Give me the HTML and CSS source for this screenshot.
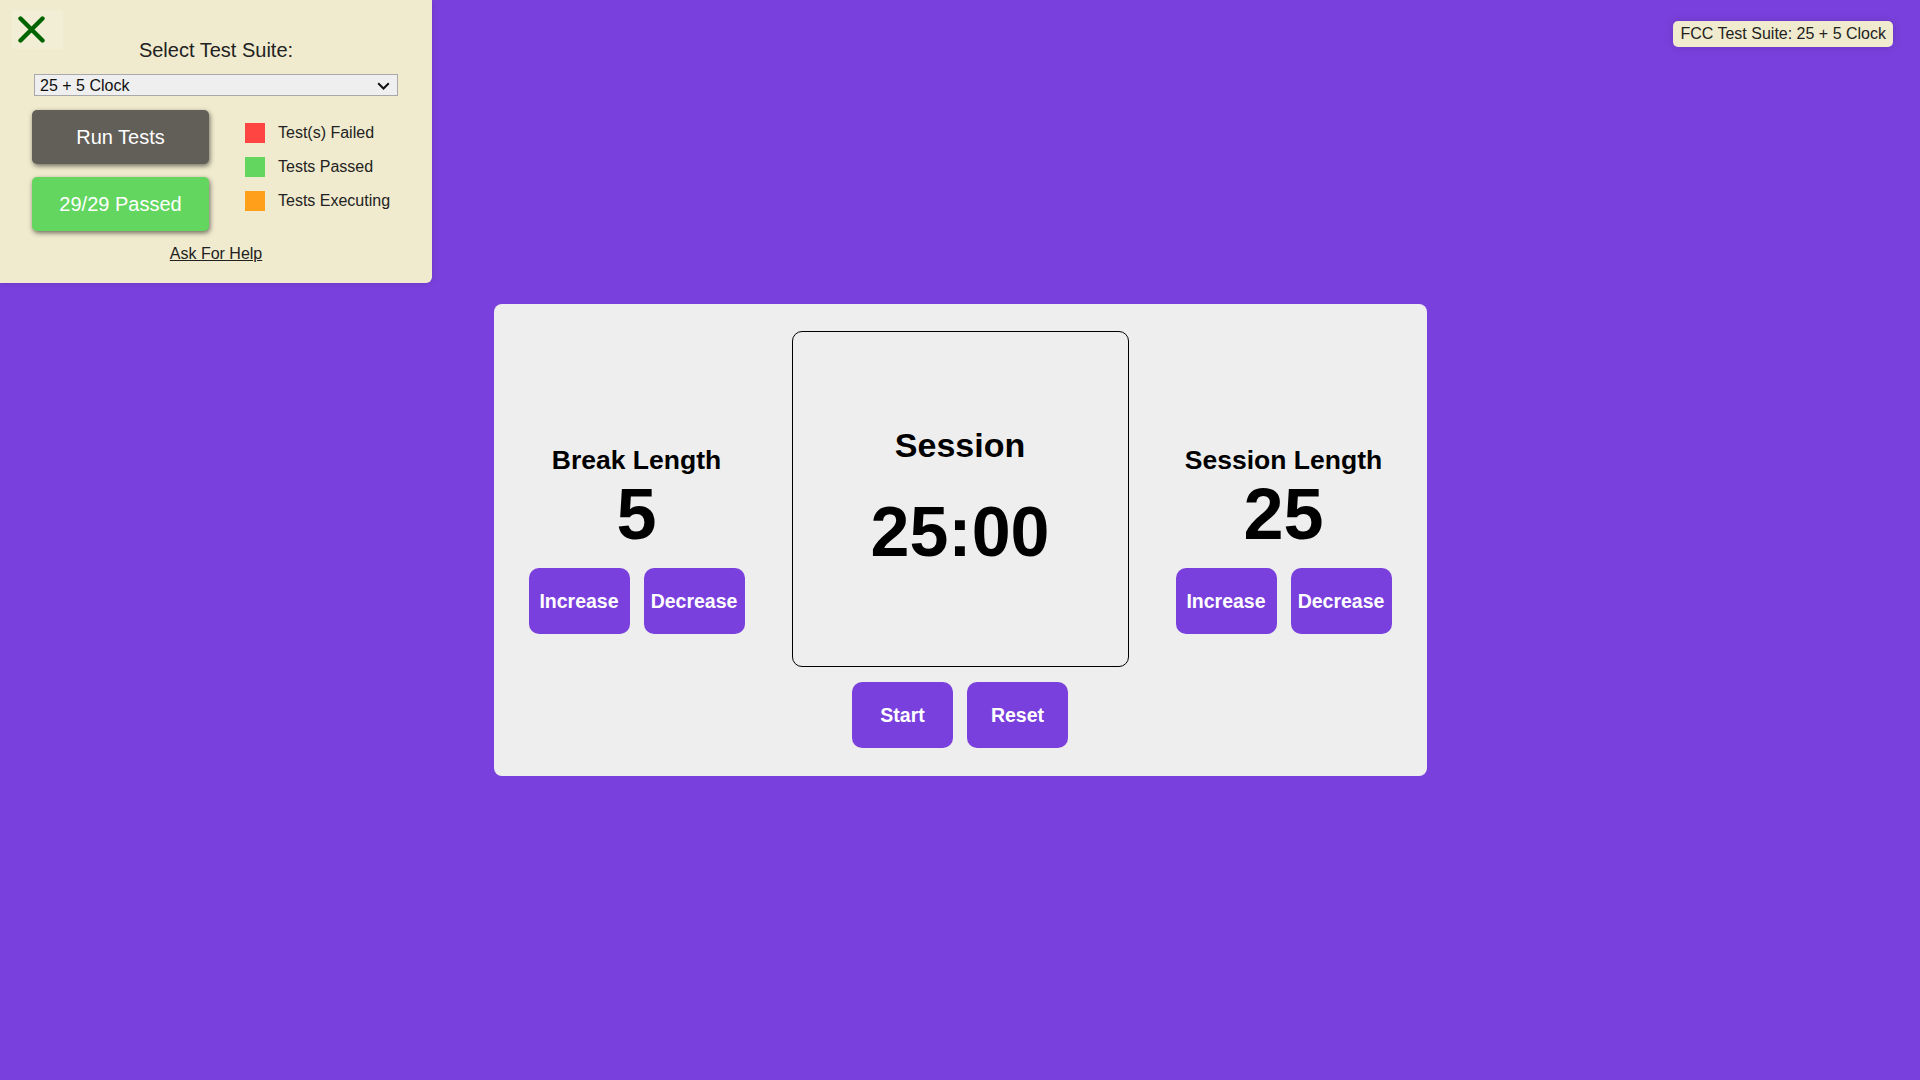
FILE: index.html
```html
<!DOCTYPE html>
<html lang="en">
<head>
<meta charset="utf-8">
<title>25 + 5 Clock</title>
<link rel="stylesheet" href="styles.css">
</head>
<body>
  <main class="stage">
    <section class="clock-card">
      <div class="clock-row">
        <div class="length-col">
          <h2 class="length-label" id="break-label">Break Length</h2>
          <div class="length-value" id="break-length">5</div>
          <div class="btn-pair">
            <button class="clock-btn" id="break-increment">Increase</button>
            <button class="clock-btn" id="break-decrement">Decrease</button>
          </div>
        </div>
        <div class="timer-box">
          <h2 class="timer-label" id="timer-label">Session</h2>
          <div class="timer-value" id="time-left">25:00</div>
        </div>
        <div class="length-col">
          <h2 class="length-label" id="session-label">Session Length</h2>
          <div class="length-value" id="session-length">25</div>
          <div class="btn-pair">
            <button class="clock-btn" id="session-increment">Increase</button>
            <button class="clock-btn" id="session-decrement">Decrease</button>
          </div>
        </div>
      </div>
      <div class="control-row">
        <button class="clock-btn" id="start_stop">Start</button>
        <button class="clock-btn" id="reset">Reset</button>
      </div>
    </section>
  </main>

  <aside class="test-panel">
    <button class="close-btn" aria-label="Close">
      <svg width="27" height="27" viewBox="0 0 27 27"><path d="M2.5 2.5 L24.5 24.5 M24.5 2.5 L2.5 24.5" stroke="#006400" stroke-width="4.4" stroke-linecap="round" fill="none"/></svg>
    </button>
    <div class="panel-title">Select Test Suite:</div>
    <div class="select-wrap">
      <select class="suite-select">
        <option>25 + 5 Clock</option>
      </select>
      <svg class="select-chevron" width="13" height="8" viewBox="0 0 13 8"><path d="M1.2 1.3 L6.5 6.5 L11.8 1.3" stroke="#111" stroke-width="2" fill="none"/></svg>
    </div>
    <div class="panel-row">
      <div class="panel-buttons">
        <button class="panel-btn run-btn">Run Tests</button>
        <button class="panel-btn pass-btn">29/29 Passed</button>
      </div>
      <ul class="legend">
        <li class="legend-item"><span class="swatch swatch-fail"></span>Test(s) Failed</li>
        <li class="legend-item"><span class="swatch swatch-pass"></span>Tests Passed</li>
        <li class="legend-item"><span class="swatch swatch-exec"></span>Tests Executing</li>
      </ul>
    </div>
    <a class="help-link" href="#">Ask For Help</a>
  </aside>

  <div class="suite-badge">FCC Test Suite: 25 + 5 Clock</div>
</body>
</html>
```

FILE: styles.css
```css
* {
  box-sizing: border-box;
}

html, body {
  margin: 0;
  padding: 0;
}

body {
  background: #7a40dd;
  font-family: "Liberation Sans", Arial, sans-serif;
  color: #000;
  min-height: 100vh;
}

.stage {
  min-height: 100vh;
  display: flex;
  align-items: center;
  justify-content: center;
}

.clock-card {
  width: 933px;
  background: #eeeeee;
  border-radius: 8px;
  padding: 27px 35px 28px;
}

.clock-row {
  display: flex;
  align-items: flex-start;
  gap: 47px;
}

.length-col {
  width: 216px;
  padding-top: 114px;
  display: flex;
  flex-direction: column;
  align-items: center;
}

.length-label {
  margin: 0;
  font-size: 26.5px;
  line-height: 30px;
  font-weight: bold;
  white-space: nowrap;
}

.length-value {
  margin-top: 3px;
  font-size: 72px;
  line-height: 72px;
  font-weight: bold;
}

.btn-pair {
  margin-top: 18px;
  display: flex;
  gap: 14px;
}

.clock-btn {
  width: 101px;
  height: 66px;
  border: none;
  border-radius: 10px;
  background: #7a40dd;
  color: #fff;
  font-family: "Liberation Sans", Arial, sans-serif;
  font-size: 19.5px;
  font-weight: bold;
  padding: 0;
  cursor: pointer;
}

.timer-box {
  width: 337px;
  height: 336px;
  border: 1px solid #000;
  border-radius: 10px;
  padding-top: 94px;
  display: flex;
  flex-direction: column;
  align-items: center;
}

.timer-label {
  margin: 0;
  font-size: 34px;
  line-height: 39px;
  font-weight: bold;
}

.timer-value {
  margin-top: 32px;
  font-size: 70px;
  line-height: 70px;
  font-weight: bold;
}

.control-row {
  margin-top: 15px;
  display: flex;
  justify-content: center;
  gap: 14px;
}

/* Test panel */
.test-panel {
  position: absolute;
  top: 0;
  left: 0;
  width: 432px;
  height: 283px;
  background: #f0ebce;
  border-radius: 0 0 6px 0;
  padding-top: 39px;
  color: #222;
  font-family: "Liberation Sans", Arial, sans-serif;
  display: flex;
  flex-direction: column;
  align-items: center;
  box-shadow: 0 0 6px rgba(0, 0, 0, 0.12);
}

.close-btn {
  position: absolute;
  top: 10px;
  left: 12px;
  width: 51px;
  height: 39px;
  border: none;
  padding: 0;
  background: rgba(255, 255, 255, 0.18);
  display: flex;
  align-items: flex-start;
  justify-content: flex-start;
  cursor: pointer;
}

.close-btn svg {
  display: block;
  margin: 6px 0 0 6px;
}

.panel-title {
  font-size: 20px;
  line-height: 23px;
}

.select-wrap {
  position: relative;
  margin-top: 12px;
  width: 364px;
  height: 22px;
}

.suite-select {
  appearance: none;
  -webkit-appearance: none;
  width: 100%;
  height: 22px;
  margin: 0;
  border: 1px solid #a9a9a9;
  border-radius: 0;
  background: #efefef;
  color: #111;
  font-family: "Liberation Sans", Arial, sans-serif;
  font-size: 16px;
  line-height: 20px;
  padding: 1px 0 0 5px;
}

.select-chevron {
  position: absolute;
  right: 8px;
  top: 8px;
}

.panel-row {
  align-self: stretch;
  margin-top: 14px;
  padding-left: 32px;
  display: flex;
  align-items: flex-start;
  gap: 36px;
}

.panel-buttons {
  display: flex;
  flex-direction: column;
  gap: 13px;
}

.panel-btn {
  width: 177px;
  height: 54px;
  border: none;
  border-radius: 5px;
  color: #fff;
  font-family: "Liberation Sans", Arial, sans-serif;
  font-size: 20px;
  padding: 0;
  box-shadow: 1px 2px 5px rgba(0, 0, 0, 0.55);
  cursor: pointer;
}

.run-btn {
  background: #625e58;
}

.pass-btn {
  background: #63d65f;
}

.legend {
  list-style: none;
  margin: 13px 0 0;
  padding: 0;
  display: flex;
  flex-direction: column;
  gap: 14px;
}

.legend-item {
  display: flex;
  align-items: center;
  gap: 13px;
  font-size: 16px;
  line-height: 20px;
  color: #222;
  white-space: nowrap;
}

.swatch {
  width: 20px;
  height: 20px;
  display: inline-block;
}

.swatch-fail {
  background: #ff4542;
}

.swatch-pass {
  background: #63d65f;
}

.swatch-exec {
  background: #ff9f1a;
}

.help-link {
  margin-top: 14px;
  font-size: 16px;
  line-height: 18px;
  color: #222;
  text-decoration: underline;
}

.suite-badge {
  position: absolute;
  top: 21px;
  right: 27px;
  background: #f0ebce;
  color: #222;
  font-size: 16px;
  line-height: 18px;
  padding: 4px 7px;
  border-radius: 5px;
  box-shadow: 0 0 8px rgba(0, 0, 0, 0.15);
}
```
